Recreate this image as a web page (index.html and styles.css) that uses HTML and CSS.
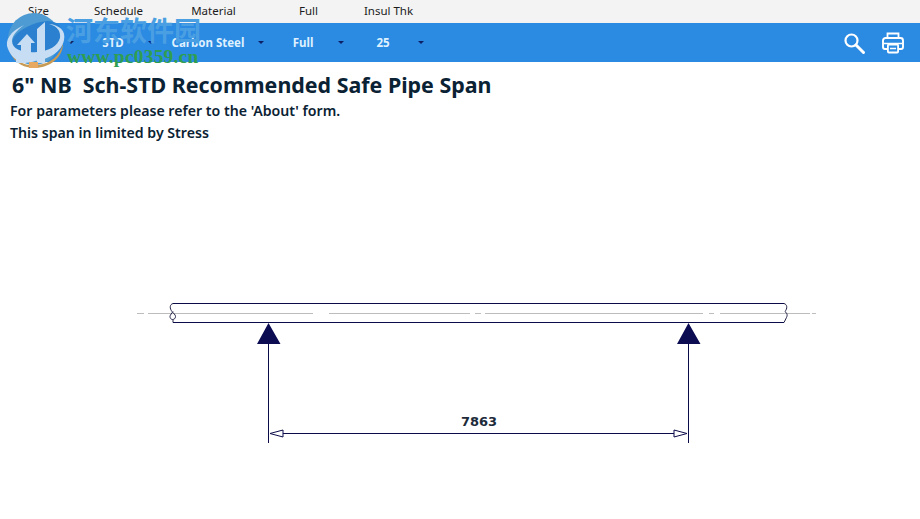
FILE: index.html
```html
<!DOCTYPE html>
<html lang="en">
<head>
<meta charset="utf-8">
<title>Safe Pipe Span</title>
<link rel="stylesheet" href="styles.css">
</head>
<body>
<div class="page">
  <div class="labels">
    <span class="cell">Size</span>
    <span class="cell">Schedule</span>
    <span class="cell wide">Material</span>
    <span class="cell">Full</span>
    <span class="cell">Insul Thk</span>
  </div>
  <div class="toolbar">
    <div class="field"><span class="value">6</span><i class="caret"></i></div>
    <div class="field"><span class="value">STD</span><i class="caret"></i></div>
    <div class="field wide"><span class="value">Carbon Steel</span><i class="caret"></i></div>
    <div class="field"><span class="value">Full</span><i class="caret"></i></div>
    <div class="field"><span class="value">25</span><i class="caret"></i></div>
    <div class="actions">
      <svg class="icon" viewBox="0 0 24 24" width="24" height="24" aria-label="Search">
        <circle cx="9.5" cy="9.5" r="6" fill="none" stroke="#fff" stroke-width="2.2"/>
        <path d="M14 14l7.5 7.5" stroke="#fff" stroke-width="3" stroke-linecap="round"/>
      </svg>
      <svg class="icon" viewBox="0 0 24 24" width="24" height="24" aria-label="Print">
        <path d="M6.5 7V2.5h11V7" fill="none" stroke="#fff" stroke-width="1.8"/>
        <path d="M6 18H4a2 2 0 0 1-2-2V9.500a2.500 2.500 0 0 1 2.500-2.500h15A2.500 2.500 0 0 1 22 9.500V16a2 2 0 0 1-2 2h-2" fill="none" stroke="#fff" stroke-width="1.900"/>
        <path d="M3 12.500h18" stroke="#fff" stroke-width="1.500"/>
        <rect x="6.900" y="13.500" width="10.200" height="8" rx="1" fill="none" stroke="#fff" stroke-width="1.800"/>
        <path d="M9 17.500h6" stroke="#fff" stroke-width="1.500"/>
      </svg>
    </div>
  </div>
  <main class="content">
    <h1 class="title">6" NB&nbsp; Sch-STD Recommended Safe Pipe Span</h1>
    <p class="note">For parameters please refer to the 'About' form.</p>
    <p class="note">This span in limited by Stress</p>
  </main>
  <svg class="drawing" viewBox="0 144 920 375" width="920" height="375">
    <path class="center" d="M137 313.500h7M148 313.500h165M329 313.500h141M475 313.500h6M485 313.500h218M709 313.500h5M720 313.500h90M812 313.500h4"/>
    <path class="line" d="M173 303.500H784M173 322.500H784"/>
    <path class="thin" d="M173 303.500c-3.500 1-3.500 5-1 8 1.500 2 3.500 3 3.500 5s-1.500 3-3 3-2.500-1.500-2.500-3 2-3.500 3-5M173 319.500v3M784 303.500c3.500 1 3.500 5 1 8 2.500 2 2.500 4 1.500 6-.5 2-2 3-2.500 5"/>
    <path class="arrow" d="M268.500 323L257 344H280.500ZM688.500 323L677 344H700.500Z"/>
    <path class="line" d="M268.500 344V443M688.500 344V443M283 433.500H674"/>
    <path class="head" d="M270 433.500L283 430V437ZM687 433.500L674 430V437Z"/>
    <text class="dim" x="479" y="426">7863</text>
  </svg>
  <div class="mark">
    <svg class="mark-logo" viewBox="0 0 64 56" width="64" height="56">
      <circle cx="30" cy="27" r="26" fill="#4d9bd2"/>
      <path d="M5 37c5 14 18 17 28 16 13-1 23-9 26-22 0 14-11 23-26 25C19 57 8 49 5 37Z" fill="#c79a55"/>
      <path d="M10 25C16 17 30 10 43 9c10 0 16 5 14 14-2 9-11 17-24 20-13 2-21-1-24-9-1-3-1-6 1-9Z" fill="#2b80cf"/>
      <path d="M4 37C0 28 7 19 20 13c-7 5-12 11-12 16 0 9 12 12 25 11 12-1 21-6 23-14 1-7-3-12-11-14 11 1 17 7 15 16-2 11-14 19-29 21C18 54 8 47 4 37Z" fill="#c6ddf3"/>
      <path d="M13 33l10-11 8 9h-4v13h-10V33ZM33 17l8-7v37h-8Z" fill="#c6ddf3"/>
      <path d="M12 45h10v6H12ZM33 45h8v6h-8Z" fill="#c6ddf3"/>
      <rect x="25" y="50" width="9" height="6" fill="#e6a95f"/>
    </svg>
    <span class="mark-cn">河东软件园</span>
    <span class="mark-url">www.pc0359.cn</span>
  </div>
</div>
</body>
</html>
```
FILE: styles.css
```css
* { box-sizing: border-box; }
html, body { margin: 0; padding: 0; background: #fff; }
.page {
  position: relative;
  width: 920px;
  height: 519px;
  overflow: hidden;
  font-family: "Noto Sans", "Open Sans", sans-serif;
}
.labels {
  display: flex;
  height: 23px;
  background: #f3f3f3;
  color: #1c1c1c;
  font-size: 11.500px;
  line-height: 21px;
}
.cell {
  width: 80px;
  padding-right: 3px;
  text-align: center;
  white-space: nowrap;
}
.cell.wide { width: 110px; }
.toolbar {
  display: flex;
  align-items: center;
  height: 39px;
  background: #2b8ae2;
  color: #dff1ff;
  font-size: 11.500px;
  font-weight: 700;
}
.field {
  display: flex;
  align-items: center;
  width: 80px;
  height: 100%;
  padding-right: 6px;
}
.field.wide { width: 110px; }
.value {
  flex: 1;
  padding-right: 2px;
  text-align: center;
  white-space: nowrap;
}
.caret {
  width: 0;
  height: 0;
  border-left: 3.500px solid transparent;
  border-right: 3.500px solid transparent;
  border-top: 3.500px solid #0f1f66;
}
.actions {
  display: flex;
  align-items: center;
  gap: 15px;
  margin-left: auto;
  padding-right: 15px;
}
.icon { display: block; }
.content {
  padding: 8px 10px 0;
  color: #0a2233;
}
.title {
  margin: 0 0 1px 2px;
  font-size: 21.400px;
  line-height: 29px;
  font-weight: 700;
  white-space: nowrap;
}
.note {
  margin: 0;
  font-size: 14.150px;
  line-height: 22px;
  font-weight: 600;
  white-space: nowrap;
}
.drawing {
  display: block;
  position: absolute;
  left: 0;
  top: 144px;
}
.center { fill: none; stroke: #bdbdbd; stroke-width: 1; }
.line { fill: none; stroke: #0b0b4a; stroke-width: 1; }
.thin { fill: none; stroke: #24244a; stroke-width: 1; }
.arrow { fill: #0c0c52; }
.head { fill: #fff; stroke: #0b0b4a; stroke-width: 1; }
.dim {
  font-family: "DejaVu Sans", sans-serif;
  font-size: 13px;
  font-weight: 700;
  fill: #1d2b3a;
  text-anchor: middle;
}
.mark {
  position: absolute;
  left: 4px;
  top: 12px;
  width: 200px;
  height: 56px;
}
.mark-logo { position: absolute; left: 0; top: 0; }
.mark-cn {
  position: absolute;
  left: 62px;
  top: 0;
  font-family: "Noto Sans CJK SC", sans-serif;
  font-size: 27px;
  line-height: 36px;
  font-weight: 700;
  color: #4a9fe2;
  white-space: nowrap;
}
.mark-url {
  position: absolute;
  left: 63px;
  top: 35px;
  font-family: "Liberation Serif", serif;
  font-size: 19.500px;
  line-height: 20px;
  font-weight: 700;
  letter-spacing: .2px;
  color: #2f9e50;
  white-space: nowrap;
}
```
